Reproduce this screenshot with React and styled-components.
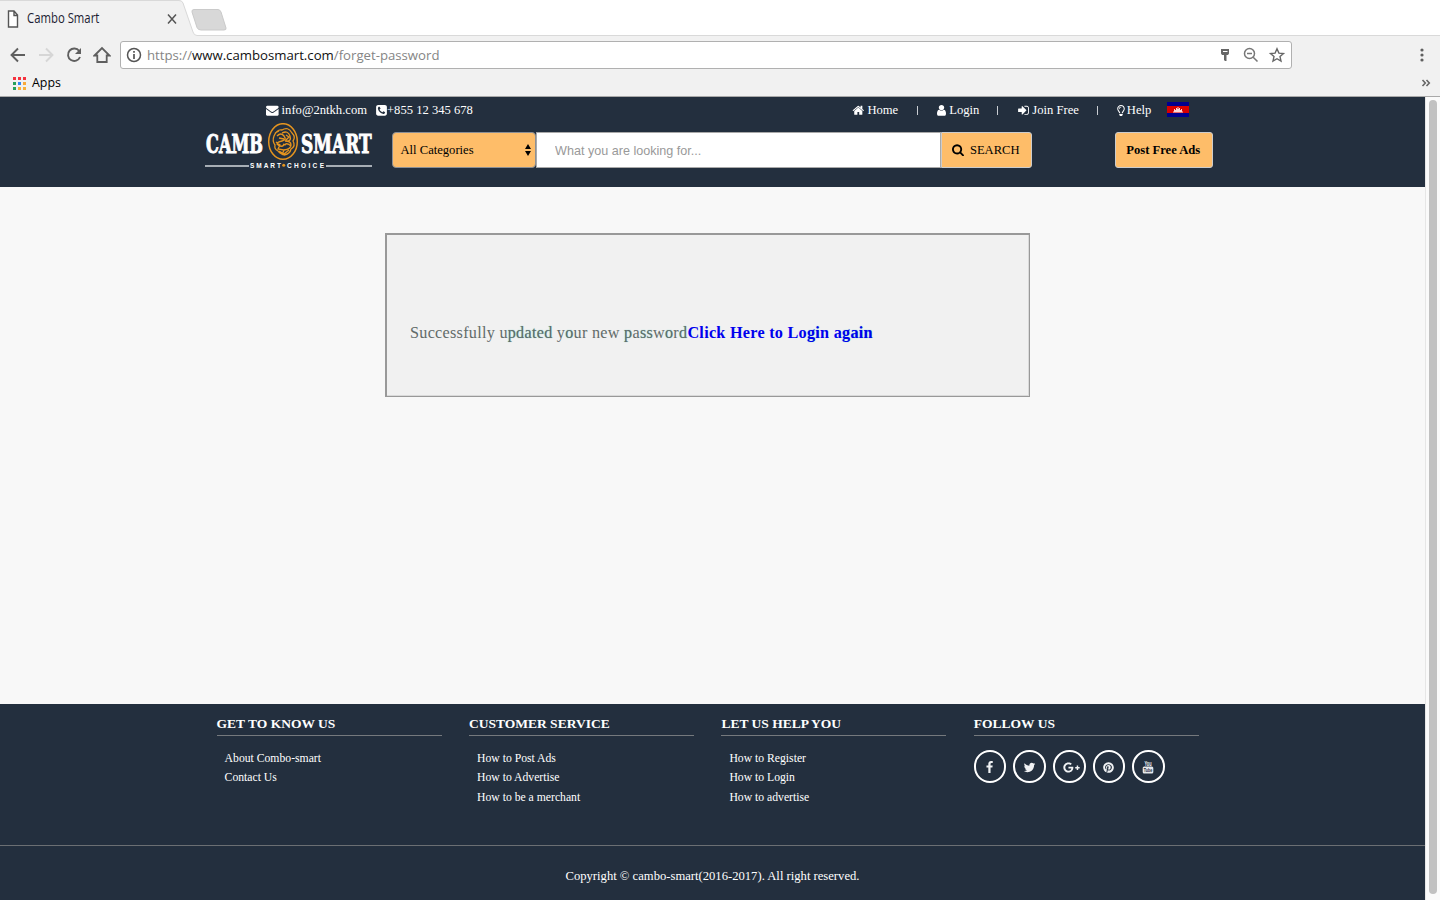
import React from "react";
import styled, { createGlobalStyle } from "styled-components";
import { FaRegLightbulb, FaGooglePlusG, FaPinterest } from "react-icons/fa";

const navy = "#232f3e";
const orange = "#febd69";

const GlobalStyle = createGlobalStyle`
  * { box-sizing: border-box; }
  body { margin: 0; background: #f8f8f8; overflow: hidden; }
  button, input { font: inherit; margin: 0; }
  svg { display: block; flex: none; }
`;

const Window = styled.div`
  width: 1440px;
  height: 900px;
  display: flex;
  flex-direction: column;
  font-family: "Liberation Serif", serif;
  overflow: hidden;
`;

/* Browser frame */
const Chrome = styled.div`
  height: 97px;
  flex: none;
  background: #f1f1f1;
  border-bottom: 1px solid #a9a9a9;
  font-family: "Open Sans", sans-serif;
`;
const TabStrip = styled.div`
  height: 37px;
  position: relative;
  background: #fff;
`;
const TabShapes = styled.svg`
  position: absolute;
  inset: 0;
`;
const Tab = styled.div`
  position: relative;
  display: flex;
  align-items: center;
  width: 186px;
  height: 37px;
  padding: 0 9px 0 7px;
`;
const TabTitle = styled.span`
  flex: 1;
  margin: -2px 0 0 8px;
  font-size: 14px;
  line-height: 20px;
  color: #1d1d33;
  transform: scaleX(0.81);
  transform-origin: left;
  white-space: nowrap;
`;
const Toolbar = styled.div`
  display: flex;
  align-items: center;
  height: 36px;
  padding: 0 14px 0 9px;
`;
const NavIcons = styled.div`
  display: flex;
  gap: 10px;
  margin-right: 9px;
`;
const AddressBar = styled.div`
  display: flex;
  align-items: center;
  width: 1172px;
  height: 28px;
  padding: 0 5px;
  border: 1px solid #b0b0b0;
  border-radius: 3px;
  background: #fff;
  font-size: 13.2px;
  color: #858585;
`;
const Url = styled.span`
  flex: 1;
  margin-left: 5px;
  line-height: 20px;
  b { font-weight: 400; color: #111; }
`;
const AddressIcons = styled.div`
  display: flex;
  gap: 8px;
`;
const MenuDots = styled.svg`
  margin-left: auto;
`;
const Bookmarks = styled.div`
  display: flex;
  align-items: center;
  height: 20px;
  padding: 0 9px 0 13px;
  font-size: 12.4px;
  color: #000;
  span { flex: 1; margin-left: 6px; line-height: 18px; }
`;

/* Site */
const Viewport = styled.div`
  display: flex;
  height: 803px;
`;
const Page = styled.div`
  display: flex;
  flex-direction: column;
  width: 1425px;
  background: #f8f8f8;
`;
const Scrollbar = styled.div`
  flex: 1;
  padding: 3px 3px 6px 3px;
  background: #fafafa;
  border-left: 1px solid #e6e6e6;
`;
const Thumb = styled.div`
  width: 8px;
  height: 794px;
  border-radius: 4px;
  background: #c1c1c1;
`;
const Header = styled.header`
  height: 90px;
  flex: none;
  background: ${navy};
  color: #fff;
  font-size: 12.6px;
`;
const TopBar = styled.div`
  display: flex;
  align-items: center;
  height: 26px;
  padding-left: 266px;
  line-height: 26px;
`;
const Contact = styled.span`
  display: flex;
  align-items: center;
  gap: ${(p) => p.$gap}px;
  margin-right: 9px;
`;
const TopNav = styled.nav`
  display: flex;
  align-items: center;
  margin-left: 370px;
`;
const TopLink = styled.a`
  display: flex;
  align-items: center;
  gap: ${(p) => p.$gap || 3}px;
  white-space: nowrap;
`;
const Divider = styled.i`
  width: 1px;
  height: 9px;
  margin: 0 ${(p) => p.$right}px 0 ${(p) => p.$left || 18}px;
  background: #c9cdd2;
`;
const Flag = styled.svg`
  margin: 0 0 2px 16px;
`;
const SearchRow = styled.div`
  display: flex;
  height: 50px;
  padding-left: 203px;
`;
const Logo = styled.svg`
  margin-right: 13px;
`;
const SearchForm = styled.form`
  display: flex;
  height: 36px;
  margin-top: 9px;
`;
const Category = styled.div`
  display: flex;
  align-items: center;
  justify-content: space-between;
  width: 144px;
  padding: 0 4px 0 7.5px;
  border: 1px solid #8b8f95;
  border-radius: 4px;
  background: ${orange};
  color: #000;
`;
const SearchInput = styled.input`
  width: 405px;
  padding: 2px 18px 0;
  border: 1px solid #a9a9a9;
  background: #fff;
  outline: none;
  font-family: "Liberation Sans", sans-serif;
  font-size: 12.6px;
  &::placeholder { color: #999; opacity: 1; }
`;
const ActionButton = styled.button`
  display: flex;
  align-items: center;
  justify-content: center;
  gap: 6px;
  width: ${(p) => p.$width}px;
  height: 36px;
  padding: 0 1.5px 0 0;
  border: 1px solid #ccc;
  border-radius: ${(p) => p.$radius};
  background: ${orange};
  color: #000;
  font-weight: ${(p) => (p.$bold ? 700 : 400)};
`;
const PostSlot = styled.div`
  margin: 9px 0 0 83px;
`;
const Main = styled.main`
  height: 517px;
  flex: none;
  padding: 46px 0 0 385px;
`;
const Notice = styled.section`
  width: 645px;
  height: 164px;
  padding: 88px 23px 0;
  background: #f1f1f1;
  border: solid #999;
  border-width: 2px 1px 1px 2px;
  box-shadow: inset -1px -1px 0 #dadada;
  font-size: 16.2px;
  line-height: 20px;
  letter-spacing: 0.27px;
  color: #626b69;
  white-space: nowrap;
`;
const Glow = styled.span`
  text-shadow: 0 0 1px #5cc9bd;
`;
const LoginLink = styled.a`
  font-weight: 700;
  color: #0000ee;
`;
const Footer = styled.footer`
  height: 196px;
  flex: none;
  background: ${navy};
  color: #fff;
`;
const Columns = styled.div`
  display: grid;
  grid-template-columns: repeat(4, 225px);
  column-gap: 27.4px;
  height: 141px;
  padding: 10px 0 0 216.6px;
`;
const Heading = styled.h4`
  height: 22px;
  margin: 0 0 12.7px;
  border-bottom: 1px solid #75797d;
  font-size: 13.5px;
  line-height: 19px;
  font-weight: 700;
`;
const Links = styled.ul`
  margin: 0;
  padding: 0 0 0 8px;
  list-style: none;
  font-size: 11.7px;
  line-height: 19.5px;
`;
const Socials = styled.div`
  display: flex;
  gap: 7px;
  margin-top: 14px;
`;
const Social = styled.a`
  display: flex;
  align-items: center;
  justify-content: center;
  width: 32.6px;
  height: 32.6px;
  padding: ${(p) => p.$pad || "2px 1px 0 0"};
  border: 2px solid #fff;
  border-radius: 50%;
  color: #f0f2f4;
`;
const Copyright = styled.div`
  height: 55px;
  border-top: 1px solid #6b6f73;
  text-align: center;
  font-size: 12.63px;
  line-height: 60px;
`;

const glyphs = {
  envelope: "M1792 710v794q0 66-47 113t-113 47h-1472q-66 0-113-47t-47-113v-794q44 49 101 87 362 246 497 345 57 42 92.5 65.5t94.5 48 110 24.5h2q51 0 110-24.5t94.5-48 92.5-65.5q170-123 498-345 57-39 100-87zm0-294q0 79-49 151t-122 123q-376 261-468 325-10 7-42.5 31t-54 38.5-52 32.5-57.5 27-50 9h-2q-23 0-50-9t-57.5-27-52-32.5-54-38.5-42.5-31q-91-64-262-182.5t-205-142.5q-62-42-117-115.5t-55-136.5q0-78 41.5-130t118.5-52h1472q65 0 112.5 47t47.5 113z",
  phone: "M1408 1193q0-11-2-16t-18-16.5-40.5-25-47.5-26.5-45.5-25-28.5-15q-5-3-19-13t-25-15-21-5q-15 0-36.5 20.5t-39.5 45-38.5 45-33.5 20.5q-7 0-16.5-3.5t-15.5-6.5-17-9.5-14-8.5q-99-55-170-126.5t-127-170.5q-2-3-8.5-14t-9.5-17-6.5-15.5-3.5-16.5q0-13 20.5-33.5t45-38.5 45-39.5 20.5-36.5q0-10-5-21t-15-25-13-19q-3-6-15-28.5t-25-45.5-26.5-47.5-25-40.5-16.5-18-16-2q-48 0-101 22-46 21-80 94.5t-34 130.5q0 16 2.5 34t5 30.5 9 33 10 29.5 12.5 33 11 30q60 164 216.5 320.5t320.5 216.5q6 2 30 11t33 12.5 29.5 10 33 9 30.5 5 34 2.5q57 0 130.5-34t94.5-80q22-53 22-101zm256-777v960q0 119-84.5 203.5t-203.5 84.5h-960q-119 0-203.5-84.5t-84.5-203.5v-960q0-119 84.5-203.5t203.5-84.5h960q119 0 203.5 84.5t84.5 203.5z",
  home: "M1472 992v480q0 26-19 45t-45 19h-384v-384h-256v384h-384q-26 0-45-19t-19-45v-480q0-1 .5-3t.5-3l575-474 575 474q1 2 1 6zm223-69l-62 74q-8 9-21 11h-3q-13 0-21-7l-692-577-692 577q-12 8-24 7-13-2-21-11l-62-74q-8-10-7-23.5t11-21.5l719-599q32-26 76-26t76 26l244 204v-195q0-14 9-23t23-9h192q14 0 23 9t9 23v408l219 182q10 8 11 21.5t-7 23.5z",
  user: "M1536 1399q0 109-62.5 187t-150.5 78h-854q-88 0-150.5-78t-62.5-187q0-85 8.5-160.5t31.5-152 58.5-131 94-89 134.5-34.5q131 128 313 128t313-128q76 0 134.5 34.5t94 89 58.5 131 31.5 152 8.5 160.5zm-256-887q0 159-112.5 271.5t-271.5 112.5-271.5-112.5-112.5-271.5 112.5-271.5 271.5-112.5 271.5 112.5 112.5 271.5z",
  signIn: "M1312 896q0 26-19 45l-544 544q-19 19-45 19t-45-19-19-45v-288h-448q-26 0-45-19t-19-45v-384q0-26 19-45t45-19h448v-288q0-26 19-45t45-19 45 19l544 544q19 19 19 45zm352-352v704q0 119-84.5 203.5t-203.5 84.5h-320q-13 0-22.5-9.5t-9.5-22.5q0-4-1-20t-.5-26.5 3-23.5 10-19.5 20.5-6.5h320q66 0 113-47t47-113v-704q0-66-47-113t-113-47h-312l-11.5-1-11.5-3-8-5.5-7-9-2-13.5q0-4-1-20t-.5-26.5 3-23.5 10-19.5 20.5-6.5h320q119 0 203.5 84.5t84.5 203.5z",
  search: "M1216 832q0-185-131.5-316.5t-316.5-131.5-316.5 131.5-131.5 316.5 131.5 316.5 316.5 131.5 316.5-131.5 131.5-316.5zm512 832q0 52-38 90t-90 38q-54 0-90-38l-343-342q-179 124-399 124-143 0-273.5-55.5t-225-150-150-225-55.5-273.5 55.5-273.5 150-225 225-150 273.5-55.5 273.5 55.5 225 150 150 225 55.5 273.5q0 220-124 399l343 343q37 37 37 90z",
  facebook: "M1343 12v264h-157q-86 0-116 36t-30 108v189h293l-39 296h-254v759h-306v-759h-255v-296h255v-218q0-186 104-288.5t277-102.5q147 0 228 12z",
  twitter: "M1684 408q-67 98-162 167 1 14 1 42 0 130-38 259.5t-115.5 248.5-184.5 210.5-258 146-323 54.5q-271 0-496-145 35 4 78 4 225 0 401-138-105-2-188-64.5t-114-159.5q33 5 61 5 43 0 85-11-112-23-185.5-111.5t-73.5-205.5v-4q68 38 146 41-66-44-105-115t-39-154q0-88 44-163 121 149 294.5 238.5t371.5 99.5q-8-38-8-74 0-134 94.5-228.5t228.5-94.5q140 0 236 102 109-21 205-78-37 115-142 178 93-10 186-50z",
};

function Glyph({ name, size = 12.6, box = "0 0 1792 1792", width }) {
  return (
    <svg width={width || size} height={size} viewBox={box} fill="currentColor">
      <path d={glyphs[name]} />
    </svg>
  );
}

function BrowserChrome() {
  return (
    <Chrome>
      <TabStrip>
        <TabShapes width="1440" height="37">
          <path d="M0 0H180Q182 .5 183 3L193 32Q194 35.5 197 35.5H1440V37H0Z" fill="#f1f1f1" />
          <path d="M0 .5H179Q182 .5 183 3L193 32Q194 35.5 197 35.5H1440" fill="none" stroke="#d9d9d9" />
          <path d="M194 9.5H218Q220 9.5 221 12L226 28Q226.500 30 224 30H201Q198 30 197 27.500L192 12Q191.500 9.500 194 9.500Z" fill="#d8d8d8" stroke="#cacaca" />
        </TabShapes>
        <Tab>
          <svg width="12" height="18" fill="#fff" stroke="#555" strokeWidth="1.4">
            <path d="M1.500 1H7L10.500 5V17H1.500ZM7 1V5.500H10.500" />
          </svg>
          <TabTitle>Cambo Smart</TabTitle>
          <svg width="10" height="12" stroke="#555" strokeWidth="1.5">
            <path d="M1 1.500L9 10.500M9 1.500L1 10.500" />
          </svg>
        </Tab>
      </TabStrip>
      <Toolbar>
        <NavIcons>
          <svg width="18" height="18" fill="none" stroke="#5f5f5f" strokeWidth="1.9"><path d="M16 9H3M9 2.500L2.500 9L9 15.500" /></svg>
          <svg width="18" height="18" fill="none" stroke="#d6d6d6" strokeWidth="1.9"><path d="M2 9H15M9 2.500L15.500 9L9 15.500" /></svg>
          <svg width="18" height="18" fill="none" stroke="#5f5f5f" strokeWidth="1.9">
            <path d="M14.200 5A6.200 6.200 0 1 0 15 11" /><path d="M16 2V8H10Z" fill="#5f5f5f" stroke="none" />
          </svg>
          <svg width="18" height="18" fill="none" stroke="#5f5f5f" strokeWidth="1.800"><path d="M1.500 9.500L9 2L16.500 9.500H13.700V16H4.300V9.500Z" /></svg>
        </NavIcons>
        <AddressBar>
          <svg width="16" height="16" fill="none" stroke="#555" strokeWidth="1.500">
            <circle cx="8" cy="8" r="6.500" /><path d="M8 7V12M8 4V5.700" strokeWidth="1.700" />
          </svg>
          <Url>https://<b>www.cambosmart.com</b>/forget-password</Url>
          <AddressIcons>
            <svg width="18" height="18"><path d="M5 3H13V7.500L12 9H10.500V15H8.500V14H8V9H6L5 7.500Z" fill="#666" /><path d="M7 5.500H11.500" stroke="#fff" /></svg>
            <svg width="18" height="18" fill="none" stroke="#777" strokeWidth="1.500"><circle cx="7.500" cy="7.500" r="5" /><path d="M5 7.500H10M11.200 11.200L15.500 15.500" /></svg>
            <svg width="18" height="18" fill="none" stroke="#666" strokeWidth="1.400"><path d="M9 2.800L10.900 7.100L15.500 7.500L12 10.600L13 15.100L9 12.700L5 15.100L6 10.600L2.500 7.500L7.100 7.100Z" /></svg>
          </AddressIcons>
        </AddressBar>
        <MenuDots width="8" height="16" fill="#5f5f5f"><circle cx="4" cy="3" r="1.600" /><circle cx="4" cy="8" r="1.600" /><circle cx="4" cy="13" r="1.600" /></MenuDots>
      </Toolbar>
      <Bookmarks>
        <svg width="13" height="13">
          {["#f5333f", "#f5333f", "#f5333f", "#26a05a", "#2f87f5", "#f8a93a", "#26a05a", "#f8b03a", "#f8b03a"].map((c, i) => (
            <rect key={i} x={(i % 3) * 5} y={Math.floor(i / 3) * 5} width="3" height="3" fill={c} />
          ))}
        </svg>
        <span>Apps</span>
        <svg width="10" height="8" fill="none" stroke="#666" strokeWidth="1.600"><path d="M1.500 1L4.300 4L1.500 7M5.500 1L8.300 4L5.500 7" /></svg>
      </Bookmarks>
    </Chrome>
  );
}

function SiteLogo() {
  return (
    <Logo width="176" height="48" fill="#fff">
      <g fontFamily="'DejaVu Serif Condensed', 'DejaVu Serif', serif" fontWeight="700" fontSize="25.5" stroke="#fff" strokeWidth="0.900">
        <text x="3" y="29.500" textLength="57" lengthAdjust="spacingAndGlyphs">CAMB</text>
        <text x="98" y="29.500" textLength="70.500" lengthAdjust="spacingAndGlyphs">SMART</text>
      </g>
      <g fill="none" stroke="#e4941f">
        <ellipse cx="80" cy="18.500" rx="14.300" ry="17.800" strokeWidth="1.500" />
        <path strokeWidth="1.300" d="M71 13q3-7 8-6q6-4 10 3q4 4 1 8q3 5-2 8q-1 5-7 6q-5-2-6-4q-4-2-3-6q-3-4-1-9M74 13q4-4 7 0t-2 5t-5 3q4 4 7 1t7 1M79 10q6-3 8 3t-5 5q6 0 6 4t-7 5M73 19l4 3l-2 4l6 1l-2 5M83 12l3 2l-3 3M76 15l5 1M72 10l4-2M80 21l3 1M76 28l5 3l5-4" />
      </g>
      <path d="M2 43H46M123 43H169" stroke="#a7aeb5" strokeWidth="2" />
      <text x="47" y="44.500" fontFamily="'Liberation Sans', sans-serif" fontWeight="700" fontSize="6.500" textLength="31">SMART</text>
      <text x="84" y="44.500" fontFamily="'Liberation Sans', sans-serif" fontWeight="700" fontSize="6.500" textLength="37">CHOICE</text>
      <circle cx="80.700" cy="42.200" r="1.500" fill="#e4941f" />
    </Logo>
  );
}

function StackedYouTube() {
  return (
    <svg width="12" height="14" fontFamily="'Liberation Sans', sans-serif" fontWeight="700">
      <text x="2.500" y="5.500" fontSize="6.500" fill="#f0f2f4" textLength="7" lengthAdjust="spacingAndGlyphs">You</text>
      <rect x="0.700" y="6.500" width="10.600" height="7" rx="1.500" fill="#e6e9ec" />
      <text x="1.800" y="12" fontSize="5.500" fill={navy} textLength="8.500" lengthAdjust="spacingAndGlyphs">Tube</text>
    </svg>
  );
}

const footerColumns = [
  ["GET TO KNOW US", ["About Combo-smart", "Contact Us"]],
  ["CUSTOMER SERVICE", ["How to Post Ads", "How to Advertise", "How to be a merchant"]],
  ["LET US HELP YOU", ["How to Register", "How to Login", "How to advertise"]],
];

export default function App() {
  return (
    <Window>
      <GlobalStyle />
      <BrowserChrome />
      <Viewport>
        <Page>
          <Header>
            <TopBar>
              <Contact $gap={3}><Glyph name="envelope" />info@2ntkh.com</Contact>
              <Contact $gap={0}><Glyph name="phone" size={12.6} width={11} box="128 0 1536 1792" />+855 12 345 678</Contact>
              <TopNav>
                <TopLink><Glyph name="home" />Home</TopLink>
                <Divider $left={19} $right={19} />
                <TopLink><Glyph name="user" width={9} box="256 0 1280 1792" />Login</TopLink>
                <Divider $right={20} />
                <TopLink><Glyph name="signIn" width={11} box="128 0 1536 1792" />Join Free</TopLink>
                <Divider $right={19} />
                <TopLink $gap={2}><FaRegLightbulb size={11} style={{ width: 8 }} />Help</TopLink>
                <Flag width="22" height="15">
                  <path fill="#00008f" d="M0 0H22V15H0Z" /><path fill="#d80000" d="M0 4H22V11H0Z" />
                  <path fill="#fff" opacity=".85" d="M6 10.500V9.500H7V7H8V8H9V6H10V7H10.500V5H11.500V7H12V6H13V8H14V7H15V9.500H16V10.500Z" />
                </Flag>
              </TopNav>
            </TopBar>
            <SearchRow>
              <SiteLogo />
              <SearchForm>
                <Category>
                  All Categories
                  <svg width="6" height="12"><path d="M0 5L3 0L6 5ZM0 7H6L3 12Z" /></svg>
                </Category>
                <SearchInput placeholder="What you are looking for..." />
                <ActionButton type="button" $width={91} $radius="0 3px 3px 0"><Glyph name="search" width={12} box="64 128 1664 1664" />SEARCH</ActionButton>
              </SearchForm>
              <PostSlot><ActionButton $width={98} $radius="3px" $bold>Post Free Ads</ActionButton></PostSlot>
            </SearchRow>
          </Header>
          <Main>
            <Notice>
              Successfully u<Glow>pdated</Glow> y<Glow>o</Glow>ur new <Glow>p</Glow>a<Glow>ss</Glow>w<Glow>o</Glow>r<Glow>d</Glow>
              <LoginLink>Click Here to Lo<Glow>gi</Glow>n a<Glow>gain</Glow></LoginLink>
            </Notice>
          </Main>
          <Footer>
            <Columns>
              {footerColumns.map(([title, items]) => (
                <section key={title}>
                  <Heading>{title}</Heading>
                  <Links>{items.map((item) => <li key={item}>{item}</li>)}</Links>
                </section>
              ))}
              <section>
                <Heading>FOLLOW US</Heading>
                <Socials>
                  <Social $pad="2px 2px 0 0"><Glyph name="facebook" size={13} /></Social>
                  <Social><Glyph name="twitter" size={13} /></Social>
                  <Social $pad="2px 0 0 5px"><FaGooglePlusG size={17} /></Social>
                  <Social><FaPinterest size={11} /></Social>
                  <Social $pad="1px 0 0 0"><StackedYouTube /></Social>
                </Socials>
              </section>
            </Columns>
            <Copyright>Copyright © cambo-smart(2016-2017). All right reserved.</Copyright>
          </Footer>
        </Page>
        <Scrollbar><Thumb /></Scrollbar>
      </Viewport>
    </Window>
  );
}
